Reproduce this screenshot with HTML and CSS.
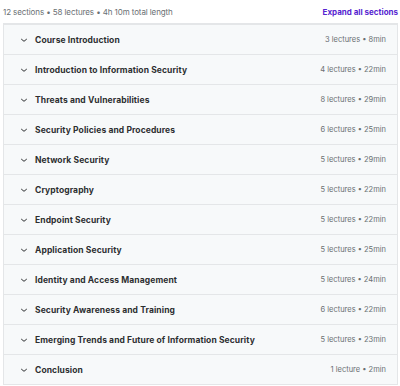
FILE: index.html
```html
<!DOCTYPE html>
<html lang="en">
<head>
    <meta charset="UTF-8">
    <meta name="viewport" content="width=device-width, initial-scale=1.0">
    <title>Course content</title>
    <link rel="stylesheet" href="styles.css">
</head>
<body>
    <div class="curriculum">
        <div class="summary">
            <span class="stats">12 sections • 58 lectures • 4h 10m total length</span>
            <button class="expand">Expand all sections</button>
        </div>

        <div class="sections">
            <div class="section">
                <span class="chev"><svg viewBox="0 0 10 10"><path d="M2.2 4 5 6.3 7.8 4"/></svg></span>
                <span class="title">Course Introduction</span>
                <span class="meta">3 lectures • 8min</span>
            </div>
            <div class="section">
                <span class="chev"><svg viewBox="0 0 10 10"><path d="M2.2 4 5 6.3 7.8 4"/></svg></span>
                <span class="title">Introduction to Information Security</span>
                <span class="meta">4 lectures • 22min</span>
            </div>
            <div class="section">
                <span class="chev"><svg viewBox="0 0 10 10"><path d="M2.2 4 5 6.3 7.8 4"/></svg></span>
                <span class="title">Threats and Vulnerabilities</span>
                <span class="meta">8 lectures • 29min</span>
            </div>
            <div class="section">
                <span class="chev"><svg viewBox="0 0 10 10"><path d="M2.2 4 5 6.3 7.8 4"/></svg></span>
                <span class="title">Security Policies and Procedures</span>
                <span class="meta">6 lectures • 25min</span>
            </div>
            <div class="section">
                <span class="chev"><svg viewBox="0 0 10 10"><path d="M2.2 4 5 6.3 7.8 4"/></svg></span>
                <span class="title">Network Security</span>
                <span class="meta">5 lectures • 29min</span>
            </div>
            <div class="section">
                <span class="chev"><svg viewBox="0 0 10 10"><path d="M2.2 4 5 6.3 7.8 4"/></svg></span>
                <span class="title">Cryptography</span>
                <span class="meta">5 lectures • 22min</span>
            </div>
            <div class="section">
                <span class="chev"><svg viewBox="0 0 10 10"><path d="M2.2 4 5 6.3 7.8 4"/></svg></span>
                <span class="title">Endpoint Security</span>
                <span class="meta">5 lectures • 22min</span>
            </div>
            <div class="section">
                <span class="chev"><svg viewBox="0 0 10 10"><path d="M2.2 4 5 6.3 7.8 4"/></svg></span>
                <span class="title">Application Security</span>
                <span class="meta">5 lectures • 25min</span>
            </div>
            <div class="section">
                <span class="chev"><svg viewBox="0 0 10 10"><path d="M2.2 4 5 6.3 7.8 4"/></svg></span>
                <span class="title">Identity and Access Management</span>
                <span class="meta">5 lectures • 24min</span>
            </div>
            <div class="section">
                <span class="chev"><svg viewBox="0 0 10 10"><path d="M2.2 4 5 6.3 7.8 4"/></svg></span>
                <span class="title">Security Awareness and Training</span>
                <span class="meta">6 lectures • 22min</span>
            </div>
            <div class="section">
                <span class="chev"><svg viewBox="0 0 10 10"><path d="M2.2 4 5 6.3 7.8 4"/></svg></span>
                <span class="title">Emerging Trends and Future of Information Security</span>
                <span class="meta">5 lectures • 23min</span>
            </div>
            <div class="section">
                <span class="chev"><svg viewBox="0 0 10 10"><path d="M2.2 4 5 6.3 7.8 4"/></svg></span>
                <span class="title">Conclusion</span>
                <span class="meta">1 lecture • 2min</span>
            </div>
        </div>
    </div>
</body>
</html>
```

FILE: styles.css
```css
body { margin: 0; background: #fff; font-family: Inter, "Noto Sans", sans-serif; color: #2d2f31; }
.curriculum { padding: 3px 2px 0 3px; }
.summary { display: flex; justify-content: space-between; align-items: center; height: 17px; margin-bottom: 3px; }
.stats { font-size: 8px; color: #6a6f73; letter-spacing: -0.1px; }
.expand { background: none; border: none; padding: 0; font-family: inherit; font-size: 8px; font-weight: 700; color: #5624d0; cursor: pointer; }
.sections { border: 1px solid #e4e6e8; }
.section { display: flex; align-items: center; height: 29px; padding: 0 11px 0 15px; background: #f7f9fa; border-top: 1px solid #e4e6e8; }
.chev { width: 10px; height: 10px; margin-right: 6px; display: flex; }
.chev svg { width: 10px; height: 10px; fill: none; stroke: #2d2f31; stroke-width: 1; }
.title { flex: 1; font-size: 8.5px; font-weight: 700; letter-spacing: 0.1px; }
.meta { font-size: 7.5px; color: #6a6f73; }
```
